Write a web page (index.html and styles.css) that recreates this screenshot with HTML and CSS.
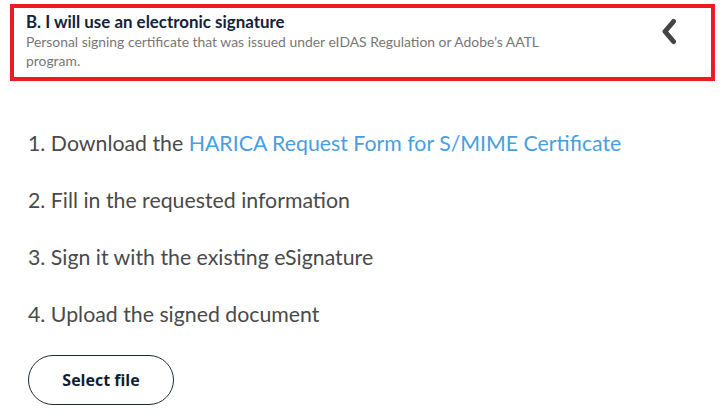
FILE: index.html
```html
<!DOCTYPE html>
<html>
<head>
<meta charset="utf-8">
<link rel="stylesheet" href="styles.css">
</head>
<body>
<div class="option">
  <div class="option-text">
    <div class="option-title">B. I will use an electronic signature</div>
    <div class="option-desc">Personal signing certificate that was issued under eIDAS Regulation or Adobe’s AATL program.</div>
  </div>
  <svg class="chevron" width="16" height="27" viewBox="0 0 16 27"><path d="M12.5 3.5 L4 13.5 L12.5 23.5" fill="none" stroke="#444" stroke-width="5" stroke-linecap="round" stroke-linejoin="round"/></svg>
</div>
<ol class="steps">
  <li>1. Download the <a href="#">HARICA Request Form for S/MIME Certificate</a></li>
  <li>2. Fill in the requested information</li>
  <li>3. Sign it with the existing eSignature</li>
  <li>4. Upload the signed document</li>
</ol>
<button class="select-btn">Select file</button>
</body>
</html>
```
FILE: styles.css
```css
html, body {
  margin: 0;
  padding: 0;
  background: #fff;
}
body {
  padding: 4px 12px 0 10px;
  font-family: Lato, "Open Sans", sans-serif;
}
.option {
  display: flex;
  justify-content: space-between;
  align-items: flex-start;
  border: 4px solid #ed1c24;
  padding: 4px 34px 4px 12px;
  box-sizing: border-box;
  height: 77px;
}
.option-text {
  width: 540px;
}
.option-title {
  font-weight: 700;
  font-size: 16.9px;
  line-height: 20px;
  color: #13223a;
}
.option-desc {
  font-size: 13.9px;
  line-height: 19px;
  color: #777;
}
.chevron {
  margin-top: 6px;
}
.steps {
  list-style: none;
  margin: 0;
  padding: 34px 0 0 18px;
}
.steps li {
  font-size: 21.3px;
  line-height: 57px;
  color: #4a4a4a;
}
.steps a {
  color: #4a9ee0;
  text-decoration: none;
}
.select-btn {
  margin: 12px 0 0 18px;
  width: 146px;
  height: 50px;
  border: 1px solid #1c2b3a;
  border-radius: 25px;
  background: #fff;
  font-family: "Open Sans", sans-serif;
  font-weight: 700;
  font-size: 16px;
  color: #0f1e33;
}
```
